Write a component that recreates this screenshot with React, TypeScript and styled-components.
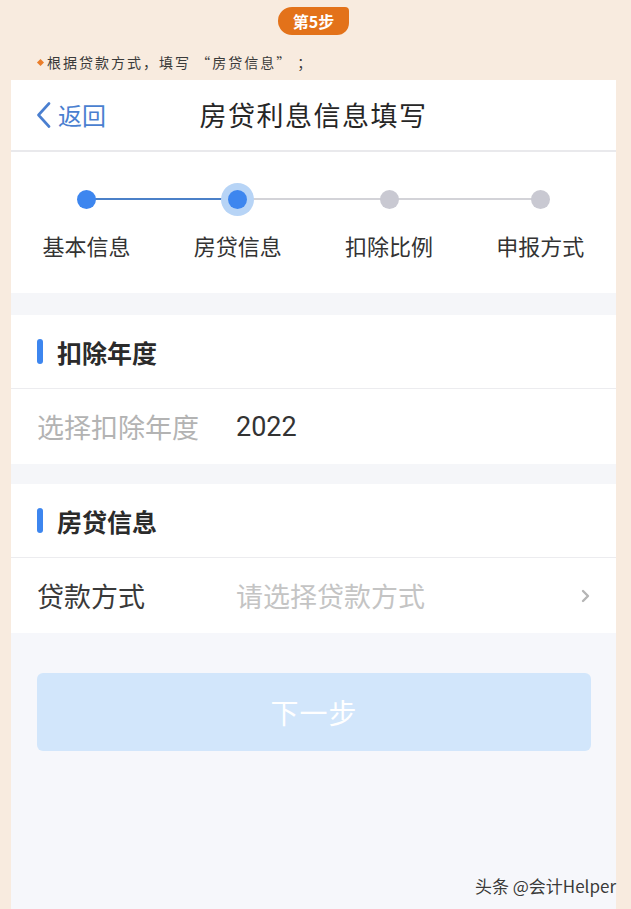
import React from "react";
import styled, { createGlobalStyle } from "styled-components";

const Global = createGlobalStyle`
  html, body { margin: 0; padding: 0; }
  body {
    background: #f8ebdf;
    font-family: "Noto Sans CJK SC", "Noto Sans", sans-serif;
  }
`;

const Page = styled.div`
  position: relative;
  min-height: 909px;
  background: #f8ebdf;
  padding: 7px 15px 0 11px;
  box-sizing: border-box;
  display: flex;
  flex-direction: column;
`;

const Intro = styled.div`
  display: flex;
  flex-direction: column;
  align-items: center;
`;

const Badge = styled.div`
  height: 28px;
  width: 71px;
  background: #e3721a;
  color: #fff;
  font-size: 16px;
  font-weight: 700;
  line-height: 28px;
  text-align: center;
  border-radius: 14px 4px 12px 14px;
`;

const Tip = styled.div`
  align-self: stretch;
  margin: 17px 0 8px;
  padding-left: 27px;
  display: flex;
  align-items: center;
  gap: 4px;
  font-size: 14px;
  line-height: 20px;
  letter-spacing: 2px;
  color: #3a3a3a;
  white-space: pre;
`;

const Diamond = styled.span`
  width: 5px;
  height: 5px;
  background: #ea7d2a;
  transform: rotate(45deg);
  flex: none;
`;

const Panel = styled.div`
  flex: 1;
  background: #f6f7fb;
  display: flex;
  flex-direction: column;
`;

const NavBar = styled.div`
  height: 70px;
  background: #fff;
  border-bottom: 2px solid #e9e9ec;
  display: grid;
  grid-template-columns: 1fr auto 1fr;
  align-items: center;
  padding: 0 25px;
`;

const Back = styled.div`
  display: flex;
  align-items: center;
  gap: 7px;
  color: #4a7fd0;
  font-size: 24px;
  line-height: 30px;
`;

const Title = styled.div`
  font-size: 27px;
  color: #262626;
  letter-spacing: 1.5px;
  line-height: 36px;
`;

const Steps = styled.div`
  background: #fff;
  display: grid;
  grid-template-columns: repeat(4, 1fr);
  padding: 30px 0 33px;
`;

const Step = styled.div`
  display: flex;
  flex-direction: column;
  align-items: center;
  gap: 14px;
`;

const Track = styled.div<{ $left?: string; $right?: string }>`
  position: relative;
  align-self: stretch;
  height: 34px;
  display: flex;
  align-items: center;
  justify-content: center;
  &::before, &::after {
    content: "";
    position: absolute;
    top: 16px;
    height: 2px;
  }
  &::before {
    left: 0;
    right: 50%;
    background: ${(p) => p.$left || "transparent"};
  }
  &::after {
    left: 50%;
    right: 0;
    background: ${(p) => p.$right || "transparent"};
  }
`;

const Dot = styled.div<{ $state: "done" | "active" | "todo" }>`
  position: relative;
  z-index: 1;
  width: 19px;
  height: 19px;
  border-radius: 50%;
  background: ${(p) => (p.$state === "todo" ? "#c9c9d2" : "#3d86ef")};
  box-shadow: ${(p) => (p.$state === "active" ? "0 0 0 7px #b7d4f6" : "none")};
`;

const StepLabel = styled.div`
  font-size: 22px;
  line-height: 30px;
  color: #333;
`;

const Gap = styled.div<{ $h: number }>`
  height: ${(p) => p.$h}px;
  background: #f5f6f9;
`;

const Section = styled.div`
  background: #fff;
`;

const SectionHead = styled.div`
  height: 73px;
  border-bottom: 1px solid #ececef;
  display: flex;
  align-items: center;
  gap: 14px;
  padding-left: 26px;
  font-size: 25px;
  font-weight: 700;
  color: #2b2b2b;
  &::before {
    content: "";
    width: 6px;
    height: 25px;
    border-radius: 3px;
    background: #3d86ef;
  }
`;

const Row = styled.div`
  height: 75px;
  display: grid;
  grid-template-columns: 199px 1fr auto;
  align-items: center;
  padding: 0 26px;
  font-size: 27px;
`;

const Label = styled.div<{ $muted?: boolean }>`
  color: ${(p) => (p.$muted ? "#b3b3b3" : "#3a3a3a")};
`;

const Value = styled.div<{ $placeholder?: boolean }>`
  color: ${(p) => (p.$placeholder ? "#c4c4c4" : "#333")};
  font-family: ${(p) => (p.$placeholder ? '"Noto Sans CJK SC", sans-serif' : 'Roboto, "Noto Sans", sans-serif')};
`;

const Actions = styled.div`
  padding: 40px 25px 0 26px;
`;

const NextButton = styled.button`
  width: 100%;
  height: 78px;
  border: none;
  border-radius: 6px;
  background: #d2e6fb;
  color: #fff;
  font-family: "Noto Sans CJK SC", sans-serif;
  font-size: 28px;
  letter-spacing: 1px;
`;

const Watermark = styled.div`
  position: absolute;
  right: 15px;
  bottom: 11px;
  font-size: 17px;
  color: #3a3a3a;
  font-family: "Noto Sans CJK SC", sans-serif;
  text-shadow: 0 0 2px #fff;
`;

const steps = ["基本信息", "房贷信息", "扣除比例", "申报方式"];
const current = 1;
const BLUE_LINE = "#4b80c8";
const GRAY_LINE = "#d3d3d8";

export default function App() {
  return (
    <>
      <Global />
      <Page>
        <Intro>
          <Badge>第5步</Badge>
          <Tip>
            <Diamond />
            {"根据贷款方式，填写 “房贷信息” ；"}
          </Tip>
        </Intro>
        <Panel>
          <NavBar>
            <Back>
              <svg width="15" height="26" viewBox="0 0 15 26" fill="none">
                <path d="M13 1.5 L2.5 13 L13 24.5" stroke="#4a7fd0" strokeWidth="2.6" strokeLinecap="round" strokeLinejoin="round" />
              </svg>
              返回
            </Back>
            <Title>房贷利息信息填写</Title>
            <div />
          </NavBar>
          <Steps>
            {steps.map((s, i) => (
              <Step key={s}>
                <Track
                  $left={i === 0 ? undefined : i <= current ? BLUE_LINE : GRAY_LINE}
                  $right={i === steps.length - 1 ? undefined : i < current ? BLUE_LINE : GRAY_LINE}
                >
                  <Dot $state={i < current ? "done" : i === current ? "active" : "todo"} />
                </Track>
                <StepLabel>{s}</StepLabel>
              </Step>
            ))}
          </Steps>
          <Gap $h={22} />
          <Section>
            <SectionHead>扣除年度</SectionHead>
            <Row>
              <Label $muted>选择扣除年度</Label>
              <Value>2022</Value>
              <span />
            </Row>
          </Section>
          <Gap $h={20} />
          <Section>
            <SectionHead>房贷信息</SectionHead>
            <Row>
              <Label>贷款方式</Label>
              <Value $placeholder>请选择贷款方式</Value>
              <svg width="9" height="14" viewBox="0 0 9 14" fill="none">
                <path d="M2 2 L7 7 L2 12" stroke="#b5b5b5" strokeWidth="2.4" strokeLinecap="round" strokeLinejoin="round" />
              </svg>
            </Row>
          </Section>
          <Actions>
            <NextButton>下一步</NextButton>
          </Actions>
        </Panel>
        <Watermark>头条 @会计Helper</Watermark>
      </Page>
    </>
  );
}
